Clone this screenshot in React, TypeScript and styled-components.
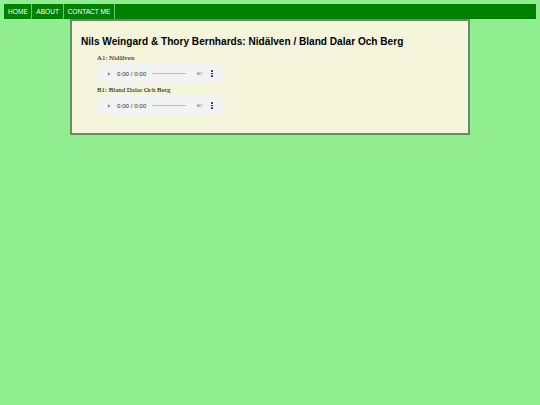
import styled, { createGlobalStyle } from "styled-components";

const GlobalStyle = createGlobalStyle`
  html, body {
    margin: 0;
    padding: 0;
    background: #90ee90;
  }
  body {
    padding: 4px;
    font-family: "Liberation Serif", "Times New Roman", serif;
  }
`;

const tracks = [
  { side: "A1", title: "Nidälven" },
  { side: "B1", title: "Bland Dalar Och Berg" },
];

const App = () => {
  return (
    <>
      <GlobalStyle />
      <NavBar>
        <NavItem>HOME</NavItem>
        <NavItem>ABOUT</NavItem>
        <NavItem>CONTACT ME</NavItem>
      </NavBar>
      <Content>
        <Title>Nils Weingard &amp; Thory Bernhards: Nidälven / Bland Dalar Och Berg</Title>
        <TrackList>
          {tracks.map((t) => (
            <Track key={t.side}>
              <TrackName>
                {t.side}: {t.title}
              </TrackName>
              <Player>
                <PlayIcon viewBox="0 0 10 10">
                  <path d="M3 2 L8 5 L3 8 Z" fill="#8a8a8a" />
                </PlayIcon>
                <Time>0:00 / 0:00</Time>
                <Progress />
                <VolumeIcon viewBox="0 0 12 12">
                  <path d="M1.5 4.5 H3.5 L6 2.5 V9.5 L3.5 7.5 H1.5 Z" fill="#9a9a9a" />
                  <path d="M7.8 4.2 Q9 6 7.8 7.8" stroke="#9a9a9a" strokeWidth="0.9" fill="none" />
                  <path d="M9 3 Q11 6 9 9" stroke="#9a9a9a" strokeWidth="0.9" fill="none" />
                </VolumeIcon>
                <MenuDots>
                  <span />
                  <span />
                  <span />
                </MenuDots>
              </Player>
            </Track>
          ))}
        </TrackList>
      </Content>
    </>
  );
};

const NavBar = styled.div`
  display: flex;
  height: 15px;
  background: #008000;
`;

const NavItem = styled.div`
  display: flex;
  align-items: center;
  padding: 0 3.5px 0 4px;
  border-right: 1px solid #6fc46f;
  color: #ffffff;
  font-family: "Liberation Sans", Arial, sans-serif;
  font-size: 6.6px;
`;

const Content = styled.div`
  margin: 0 auto;
  background: #f5f5dc;
  border: 2px solid #6b8a6b;
  padding: 15px 9px 18px;
  box-sizing: content-box;
  width: 378px;
`;

const Title = styled.h1`
  margin: 0 0 6px;
  font-family: "Liberation Sans", Arial, sans-serif;
  font-size: 10.1px;
  font-weight: bold;
  color: #000000;
  line-height: 12px;
`;

const TrackList = styled.div`
  display: flex;
  flex-direction: column;
  gap: 3px;
  padding-left: 16px;
`;

const Track = styled.div`
  display: flex;
  flex-direction: column;
  gap: 2px;
`;

const TrackName = styled.div`
  font-size: 6.9px;
  line-height: 8px;
  color: #000000;
`;

const Player = styled.div`
  display: flex;
  align-items: center;
  width: 126px;
  height: 19px;
  border-radius: 10px;
  background: #f1f3f4;
  padding-left: 9px;
  box-sizing: border-box;
`;

const PlayIcon = styled.svg`
  width: 6px;
  height: 6px;
  margin-right: 5px;
`;

const Time = styled.span`
  width: 30px;
  font-family: "Liberation Sans", Arial, sans-serif;
  font-size: 6.2px;
  color: #333333;
  white-space: nowrap;
`;

const Progress = styled.div`
  width: 34px;
  height: 1.5px;
  margin-left: 5px;
  background: #b8babc;
  border-radius: 1px;
`;

const VolumeIcon = styled.svg`
  width: 7px;
  height: 7px;
  margin-left: 10px;
`;

const MenuDots = styled.div`
  display: flex;
  flex-direction: column;
  gap: 1px;
  margin-left: 8px;
  span {
    width: 1.6px;
    height: 1.6px;
    border-radius: 50%;
    background: #222222;
  }
`;

export default App;
